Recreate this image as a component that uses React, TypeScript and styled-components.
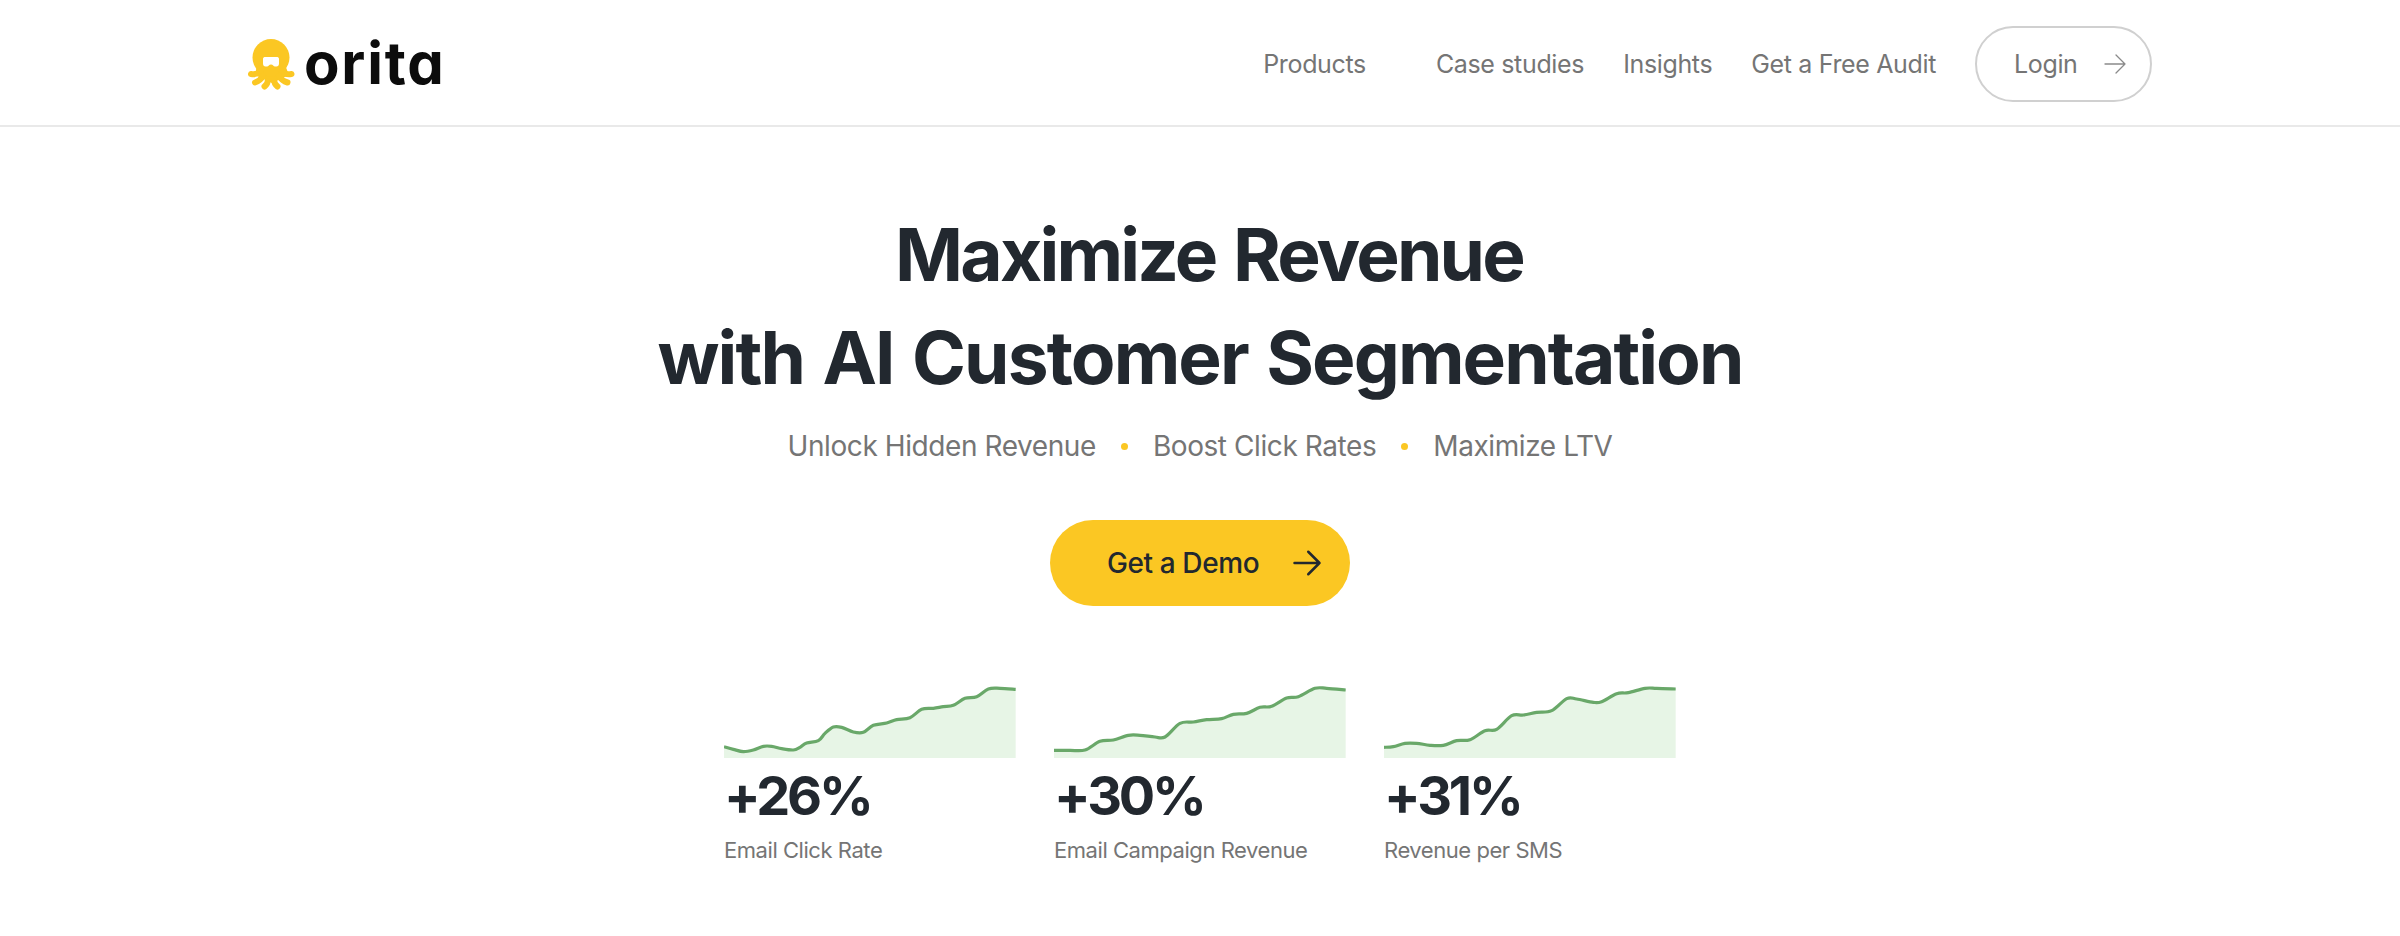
import React from "react";
import styled, { createGlobalStyle } from "styled-components";

const Global = createGlobalStyle`
  html, body { margin: 0; padding: 0; background: #fff; }
  body { font-family: Inter, "Liberation Sans", sans-serif; overflow: hidden; }
`;

const Page = styled.div`
  width: 2400px;
  height: 936px;
  overflow: hidden;
`;
const Header = styled.header`
  box-sizing: border-box;
  height: 127px;
  border-bottom: 2px solid #e9e9e9;
  padding: 26px 248px 0 248px;
  display: flex;
  justify-content: space-between;
  align-items: flex-start;
`;
const Logo = styled.div`
  display: flex;
  align-items: center;
  gap: 9px;
  height: 76px;
`;
const Wordmark = styled.span`
  font-size: 58px;
  font-weight: 700;
  color: #0c0c0c;
  letter-spacing: 1.8px;
  line-height: 1;
  font-feature-settings: "cv11" 1;
  margin-top: -2px;
`;
const Nav = styled.nav`
  display: flex;
  align-items: center;
  gap: 39px;
  height: 76px;
`;
const NavLink = styled.a<{ $extra?: number }>`
  font-size: 25px;
  color: #757575;
  letter-spacing: -0.35px;
  white-space: nowrap;
  margin-right: ${(p) => p.$extra ?? 0}px;
`;
const LoginButton = styled.a`
  box-sizing: border-box;
  width: 177px;
  height: 76px;
  border: 2px solid #d0d0d0;
  border-radius: 38px;
  display: flex;
  align-items: center;
  padding-left: 37px;
  gap: 25px;
  font-size: 25px;
  color: #757575;
  letter-spacing: -0.35px;
`;
const Hero = styled.main`
  display: flex;
  flex-direction: column;
  align-items: center;
`;
const Title = styled.h1`
  margin: 76px 0 0;
  font-size: 73px;
  line-height: 103px;
  font-weight: 700;
  color: #22282f;
  word-spacing: 3px;
  text-align: center;
`;
const TitleLine = styled.span<{ $shift?: number; $track: number }>`
  display: block;
  white-space: nowrap;
  letter-spacing: ${(p) => p.$track}px;
  padding-left: ${(p) => p.$shift ?? 0}px;
`;
const Sub = styled.div`
  margin-top: 17px;
  display: flex;
  align-items: center;
  font-size: 28px;
  line-height: 40px;
  color: #757575;
  letter-spacing: -0.42px;
`;
const Dot = styled.i`
  width: 7px;
  height: 7px;
  border-radius: 50%;
  background: #fbc723;
  margin: 0 25px;
`;
const DemoButton = styled.a`
  box-sizing: border-box;
  margin-top: 54px;
  width: 300px;
  height: 86px;
  border-radius: 43px;
  background: #fbc723;
  display: flex;
  align-items: center;
  padding-left: 57px;
  gap: 33px;
  font-size: 28px;
  font-weight: 500;
  color: #22282f;
  letter-spacing: -0.4px;
`;
const Stats = styled.section`
  margin-top: 80px;
  display: flex;
  gap: 38px;
`;
const Stat = styled.div`
  width: 292px;
`;
const Spark = styled.svg`
  display: block;
  width: 292px;
  height: 72px;
`;
const Value = styled.div`
  margin-top: 2px;
  font-size: 54px;
  line-height: 72px;
  font-weight: 700;
  color: #22282f;
  letter-spacing: -3.2px;
`;
const Label = styled.div`
  margin-top: 3px;
  font-size: 22px;
  line-height: 30px;
  color: #757575;
  letter-spacing: -0.45px;
`;

const toPath = (pts: number[][], ox: number) => {
  const p = pts.map(([x, y]) => [(x - ox) / 3, (y - 264) / 3 + 72]);
  let d = `M${p[0][0]} ${p[0][1]}`;
  for (let i = 0; i < p.length - 1; i++) {
    const a = p[Math.max(i - 1, 0)], b = p[i], c = p[i + 1], e = p[Math.min(i + 2, p.length - 1)];
    d += ` C${b[0] + (c[0] - a[0]) / 6} ${b[1] + (c[1] - a[1]) / 6} ${c[0] - (e[0] - b[0]) / 6} ${c[1] - (e[1] - b[1]) / 6} ${c[0]} ${c[1]}`;
  }
  return { d, end: p[p.length - 1][0] };
};

const Sparkline = ({ pts, ox }: { pts: number[][]; ox: number }) => {
  const { d, end } = toPath(pts, ox);
  return (
    <Spark viewBox="0 0 292 72">
      <path d={`${d} L${end} 72 L0 72 Z`} fill="#e7f5e6" />
      <path d={d} fill="none" stroke="#69a869" strokeWidth="3.2" />
    </Spark>
  );
};

const stats = [
  {
    value: "+26%", label: "Email Click Rate", ox: 72,
    pts: [[72,230],[100,238],[130,245],[160,240],[190,229],[215,229],[245,236],[280,240],[300,232],[320,219],[355,212],[375,190],[400,171],[425,172],[460,186],[490,187],[520,166],[560,159],[590,149],[630,143],[665,118],[700,115],[730,110],[760,106],[795,85],[830,80],[865,57],[900,55],[947,58]],
  },
  {
    value: "+30%", label: "Email Campaign Revenue", ox: 42,
    pts: [[42,241],[90,241],[135,240],[180,214],[220,210],[265,196],[300,196],[345,201],[375,201],[420,160],[460,156],[500,149],[545,146],[580,133],[620,130],[660,112],[695,109],[740,84],[775,80],[825,55],[860,55],[917,60]],
  },
  {
    value: "+31%", label: "Revenue per SMS", ox: 42,
    pts: [[42,232],[70,230],[105,220],[140,220],[180,226],[220,226],[260,212],[300,209],[345,182],[380,178],[425,137],[460,135],[500,127],[545,122],[590,86],[620,87],[670,97],[695,95],[740,71],[775,68],[825,55],[860,55],[917,57]],
  },
];

const Arrow = ({ size, color, sw }: { size: number; color: string; sw: number }) => (
  <svg width={size} height={size} viewBox="0 0 24 24" fill="none" stroke={color} strokeWidth={sw} strokeLinecap="round" strokeLinejoin="round">
    <path d="M2 12h20M13 3l9 9-9 9" />
  </svg>
);

const Octopus = () => (
  <svg width="47" height="51" viewBox="0 0 47 51">
    <g fill="#fbc723">
      <circle cx="23" cy="18.5" r="18.5" />
      <path d="M9 26h28l4 10-17 8-17-8Z" />
    </g>
    <g fill="none" stroke="#fbc723" strokeWidth="6" strokeLinecap="round">
      <path d="M12 33C9 35.500 6 35.500 3 35" />
      <path d="M34 33C37 35.500 40 35.500 43.500 35" />
      <path d="M15 37C13 40.500 10 42.500 7 43.500" />
      <path d="M31 37C33 40.500 36 42.500 39.500 43.500" />
      <path d="M20 40C20 44 18.500 46 16.500 47.500" />
      <path d="M26 40C26 44 27.500 46 29.500 47.500" />
    </g>
    <path d="M15 20c0-1.500 1-2 2.500-2h11c1.500 0 2.500 .5 2.500 2v4.500c0 2-1 3-2.500 3h-1.500c-1.500 0-2-2-4-2s-2.500 2-4 2h-1.500c-1.500 0-2.500-1-2.500-3Z" fill="#fff" />
  </svg>
);

export default function App() {
  return (
    <Page>
      <Global />
      <Header>
        <Logo>
          <Octopus />
          <Wordmark>orita</Wordmark>
        </Logo>
        <Nav>
          <NavLink $extra={31}>Products</NavLink>
          <NavLink>Case studies</NavLink>
          <NavLink>Insights</NavLink>
          <NavLink>Get a Free Audit</NavLink>
          <LoginButton>
            Login
            <Arrow size={24} color="#8a8a8a" sw={1.3} />
          </LoginButton>
        </Nav>
      </Header>
      <Hero>
        <Title>
          <TitleLine $shift={18} $track={-2.8}>Maximize Revenue</TitleLine>
          <TitleLine $track={-1.9}>with AI Customer Segmentation</TitleLine>
        </Title>
        <Sub>
          Unlock Hidden Revenue<Dot />Boost Click Rates<Dot />Maximize LTV
        </Sub>
        <DemoButton>
          Get a Demo
          <Arrow size={30} color="#22282f" sw={2} />
        </DemoButton>
        <Stats>
          {stats.map((s) => (
            <Stat key={s.value}>
              <Sparkline pts={s.pts} ox={s.ox} />
              <Value>{s.value}</Value>
              <Label>{s.label}</Label>
            </Stat>
          ))}
        </Stats>
      </Hero>
    </Page>
  );
}
